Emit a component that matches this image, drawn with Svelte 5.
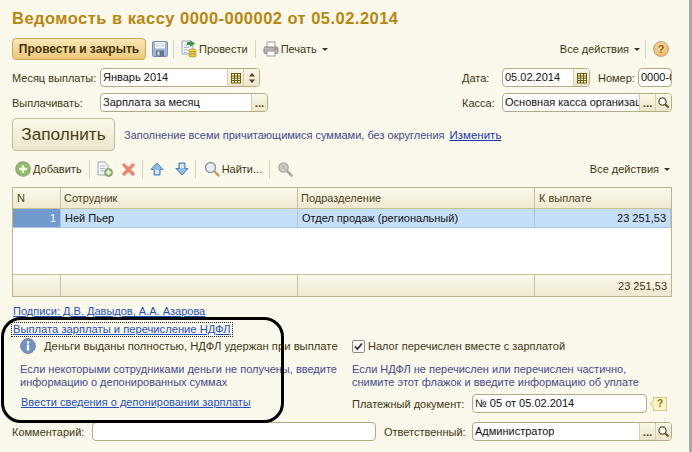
<script>
	const rows = [{ n: 1, name: 'Ней Пьер', dept: 'Отдел продаж (региональный)', sum: '23 251,53' }];
</script>

{#snippet calendar()}
	<span class="cell-btn">
		<svg width="12" height="12" viewBox="0 0 12 12">
			<rect x="1.5" y="1.5" width="9" height="9.5" fill="#fff6c8" stroke="#6b5a12" />
			<path d="M1.5 4h9M1.5 6.2h9M1.5 8.5h9M4.5 2v9M7.5 2v9" stroke="#6b5a12" fill="none" />
		</svg>
	</span>
{/snippet}

{#snippet dots()}
	<span class="cell-btn dots">...</span>
{/snippet}

{#snippet lens()}
	<span class="cell-btn">
		<svg width="13" height="13" viewBox="0 0 13 13">
			<circle cx="5.5" cy="5.5" r="3.6" fill="#fff" stroke="#5c5330" stroke-width="1.3" />
			<path d="M8.2 8.2l3.4 3.4" stroke="#5c5330" stroke-width="2" />
		</svg>
	</span>
{/snippet}

<div class="page">
	<h1>Ведомость в кассу 0000-000002 от 05.02.2014</h1>

	<div class="toolbar main-bar">
		<button class="primary">Провести и закрыть</button>
		<svg class="ico save" width="16" height="16" viewBox="0 0 16 16">
			<rect x="0.5" y="0.5" width="15" height="15" rx="1" fill="#9db6d4" stroke="#7c93b2" />
			<rect x="3" y="1" width="10" height="6.5" fill="#f2f5f9" />
			<path d="M4 3h8M4 5h8" stroke="#c6d2e0" />
			<rect x="4" y="9.5" width="8" height="6" fill="#61778f" />
			<rect x="5.5" y="10.5" width="2" height="4" fill="#d8e0ea" />
		</svg>
		<i class="sep"></i>
		<svg class="ico" width="16" height="18" viewBox="0 0 16 18">
			<path d="M1 1h8l3 3v10H1z" fill="#f4f6f8" stroke="#9aa8ba" />
			<path d="M3 5h5M3 7.5h5M3 10h4M3 12.5h3" stroke="#a9b8cc" />
			<path d="M9 0l5 3.5-5 3.5V5H6V2h3z" fill="#3f9a3f" />
			<ellipse cx="11.5" cy="10.5" rx="3.8" ry="1.6" fill="#f2c850" stroke="#a57a16" stroke-width=".6" />
			<ellipse cx="11.5" cy="13" rx="3.8" ry="1.6" fill="#f2c850" stroke="#a57a16" stroke-width=".6" />
			<ellipse cx="11.5" cy="15.5" rx="3.8" ry="1.6" fill="#f2c850" stroke="#a57a16" stroke-width=".6" />
		</svg>
		<span class="tool-text">Провести</span>
		<i class="sep"></i>
		<svg class="ico" width="16" height="16" viewBox="0 0 16 16">
			<rect x="4" y="1" width="8" height="6" fill="#fff" stroke="#9a9a9a" />
			<rect x="1" y="6" width="14" height="6.5" rx="1.5" fill="#b5b5b5" stroke="#858585" />
			<rect x="4" y="10" width="8" height="5" fill="#fff" stroke="#9a9a9a" />
			<rect x="11.5" y="7.5" width="2" height="1" fill="#e04a2a" />
		</svg>
		<span class="tool-text">Печать</span>
		<i class="caret"></i>
		<div class="push"></div>
		<span class="tool-text">Все действия</span>
		<i class="caret"></i>
		<i class="sep after-caret"></i>
		<span class="help">?</span>
	</div>

	<div class="form-row first">
		<span class="label w88">Месяц выплаты:</span>
		<div class="field w160">
			<span class="value">Январь 2014</span>
			{@render calendar()}
			<span class="cell-btn spin">
				<svg width="8" height="12" viewBox="0 0 8 12"><path d="M4 1l3 3.4H1zM4 11L1 7.6h6z" fill="#4f4420" /></svg>
			</span>
		</div>
		<div class="push"></div>
		<span class="label w40">Дата:</span>
		<div class="field w88">
			<span class="value">05.02.2014</span>
			{@render calendar()}
		</div>
		<span class="label number">Номер:</span>
		<div class="field w34"><span class="value">0000-000002</span></div>
	</div>

	<div class="form-row">
		<span class="label w88">Выплачивать:</span>
		<div class="field w168">
			<span class="value">Зарплата за месяц</span>
			{@render dots()}
		</div>
		<div class="push"></div>
		<span class="label w40">Касса:</span>
		<div class="field w170">
			<span class="value">Основная касса организации</span>
			{@render dots()}
			{@render lens()}
		</div>
	</div>

	<div class="fill-row">
		<button class="fill">Заполнить</button>
		<span class="hint">Заполнение всеми причитающимися суммами, без округления</span>
		<a class="link strong" href="#change">Изменить</a>
	</div>

	<div class="toolbar table-bar">
		<svg class="ico" width="16" height="16" viewBox="0 0 16 16">
			<circle cx="8" cy="8" r="7.2" fill="#8fbf5c" stroke="#9c9f8e" stroke-width="1.3" />
			<path d="M8 4v8M4 8h8" stroke="#f4f8ee" stroke-width="2.4" />
		</svg>
		<span class="tool-text">Добавить</span>
		<i class="sep"></i>
		<svg class="ico" width="16" height="16" viewBox="0 0 16 16">
			<path d="M1 1h7l3 3v10H1z" fill="#f4f6f8" stroke="#9aa8ba" />
			<path d="M3 5h5M3 7.5h5M3 10h4" stroke="#a9b8cc" />
			<circle cx="11.5" cy="11.5" r="4" fill="#8fbf5c" stroke="#8c9a80" />
			<path d="M11.5 9v5M9 11.5h5" stroke="#fff" stroke-width="1.5" />
		</svg>
		<svg class="ico del" width="13" height="13" viewBox="0 0 13 13">
			<path d="M2 2l9 9M11 2l-9 9" stroke="#ef8272" stroke-width="3.2" stroke-linecap="round" />
		</svg>
		<i class="sep"></i>
		<svg class="ico" width="14" height="14" viewBox="0 0 14 14">
			<path d="M7 1l6 6.5H10V13H4V7.5H1z" fill="#8dbde6" stroke="#4f7fa8" />
			<path d="M5 8h4v4H5z" fill="#d6e8f7" />
		</svg>
		<svg class="ico down" width="14" height="14" viewBox="0 0 14 14">
			<path d="M7 13L1 6.5h3V1h6v5.5h3z" fill="#8dbde6" stroke="#4f7fa8" />
			<path d="M5 2h4v4H5z" fill="#d6e8f7" />
		</svg>
		<i class="sep narrow"></i>
		<svg class="ico" width="16" height="16" viewBox="0 0 16 16">
			<circle cx="6.5" cy="6.5" r="5" fill="#e6f0f8" stroke="#8d98a6" stroke-width="1.4" />
			<path d="M10.5 10.5l4 4" stroke="#c49a5a" stroke-width="2.4" stroke-linecap="round" />
		</svg>
		<span class="tool-text">Найти...</span>
		<i class="sep"></i>
		<svg class="ico" width="16" height="16" viewBox="0 0 16 16">
			<circle cx="6.5" cy="6.5" r="4.6" fill="#cfcfca" stroke="#aaa9a2" stroke-width="1.4" />
			<path d="M10.5 10.5l4 4" stroke="#aaa9a2" stroke-width="2.6" stroke-linecap="round" />
			<path d="M3.5 2.5l6 7M9.5 2.5l-6 7" stroke="#b3aea2" />
		</svg>
		<div class="push"></div>
		<span class="tool-text">Все действия</span>
		<i class="caret last"></i>
	</div>

	<table>
		<colgroup>
			<col class="c-n" /><col class="c-name" /><col class="c-dept" /><col />
		</colgroup>
		<thead>
			<tr>
				<th>N</th>
				<th>Сотрудник</th>
				<th>Подразделение</th>
				<th>К выплате</th>
			</tr>
		</thead>
		<tbody>
			{#each rows as row}
				<tr class="selected">
					<td class="num">{row.n}</td>
					<td>{row.name}</td>
					<td>{row.dept}</td>
					<td class="right">{row.sum}</td>
				</tr>
			{/each}
			<tr class="empty"><td colspan="4"></td></tr>
		</tbody>
		<tfoot>
			<tr>
				<td></td>
				<td></td>
				<td></td>
				<td class="right">23 251,53</td>
			</tr>
		</tfoot>
	</table>

	<a class="link signs" href="#signs">Подписи: Д.В. Давыдов, А.А. Азарова</a>
	<div class="section-line"><a class="link focused" href="#pay">Выплата зарплаты и перечисление НДФЛ</a></div>

	<div class="columns">
		<div class="col-left">
			<div class="info">
				<svg width="16" height="16" viewBox="0 0 16 16">
					<circle cx="8" cy="8" r="7.4" fill="#6d94c2" stroke="#7d8794" />
					<circle cx="8" cy="4.4" r="1.4" fill="#fff" />
					<rect x="6.8" y="6.6" width="2.4" height="6" fill="#fff" />
				</svg>
				<span>Деньги выданы полностью, НДФЛ удержан при выплате</span>
			</div>
			<p class="hint note">Если некоторыми сотрудниками деньги не получены, введите<br />информацию о депонированных суммах</p>
			<a class="link deposit" href="#deposit">Ввести сведения о депонировании зарплаты</a>
		</div>
		<div class="col-right">
			<div class="check-row">
				<span class="checkbox">
					<svg width="9" height="9" viewBox="0 0 9 9"><path d="M1 4.5l2.4 2.6L8 1.5" fill="none" stroke="#333" stroke-width="1.8" /></svg>
				</span>
				<span>Налог перечислен вместе с зарплатой</span>
			</div>
			<p class="hint note">Если НДФЛ не перечислен или перечислен частично,<br />снимите этот флажок и введите информацию об уплате</p>
			<div class="doc-row">
				<span class="label">Платежный документ:</span>
				<div class="field w175"><span class="value">№ 05 от 05.02.2014</span></div>
				<span class="tip">?</span>
			</div>
		</div>
	</div>

	<div class="form-row bottom">
		<span class="label comment">Комментарий:</span>
		<div class="field w284"></div>
		<span class="label owner">Ответственный:</span>
		<div class="field w200">
			<span class="value">Администратор</span>
			{@render dots()}
			{@render lens()}
		</div>
	</div>

	<!-- обводка от руки поверх формы -->
	<div class="annotation"></div>
</div>

<style>
	:global(body) {
		margin: 0;
	}

	.page {
		position: relative;
		box-sizing: border-box;
		width: 692px;
		height: 452px;
		overflow: hidden;
		padding: 0 17px 0 12px;
		border-right: 3px solid #a8a8a4;
		background: #fbf9ec;
		font-family: 'Liberation Sans', Arial, sans-serif;
		font-size: 11px;
		color: #3f3510;
		display: flex;
		flex-direction: column;
	}

	h1 {
		margin: 8px 0 10px;
		height: 20px;
		line-height: 20px;
		font-size: 16.5px;
		font-weight: bold;
		letter-spacing: 0.47px;
		color: #b8860f;
		white-space: nowrap;
	}

	.toolbar {
		display: flex;
		align-items: center;
		flex: none;
	}

	.main-bar {
		height: 22px;
		padding-right: 3px;
	}

	.table-bar {
		height: 18px;
		margin: 9px 0 9px 3px;
		padding-right: 2px;
	}

	.push {
		flex: 1;
	}

	.ico {
		flex: none;
	}

	.save {
		margin-left: 6px;
	}

	.tool-text {
		margin-left: 2px;
		white-space: nowrap;
	}

	.sep {
		width: 1px;
		height: 18px;
		margin: 0 7px;
		background: #d8d2b4;
		flex: none;
	}

	.save + .sep {
		margin-left: 5px;
	}

	.after-caret {
		margin-left: 5px;
	}

	.narrow {
		margin-left: 6px;
		margin-right: 8px;
	}

	.caret {
		width: 0;
		height: 0;
		margin-left: 5px;
		border-left: 3px solid transparent;
		border-right: 3px solid transparent;
		border-top: 3px solid #3f3510;
		flex: none;
	}

	.del {
		margin-left: 9px;
	}

	.down {
		margin-left: 11px;
	}

	button {
		font-family: inherit;
		cursor: pointer;
		box-sizing: border-box;
	}

	.primary {
		width: 134px;
		height: 22px;
		padding: 0;
		border: 1px solid #c9a860;
		border-radius: 4px;
		background: linear-gradient(#fbe6b4, #eec878);
		font-size: 12px;
		font-weight: bold;
		color: #3f3510;
	}

	.form-row {
		display: flex;
		align-items: center;
		height: 19px;
		margin-top: 6px;
		flex: none;
	}

	.first {
		margin-top: 8px;
	}

	.label {
		flex: none;
		white-space: nowrap;
	}

	.w88.label {
		width: 88px;
	}

	.w40 {
		width: 40px;
	}

	.number {
		width: 40px;
		margin-left: 8px;
	}

	.field {
		box-sizing: border-box;
		height: 19px;
		flex: none;
		display: flex;
		align-items: stretch;
		overflow: hidden;
		background: #fff;
		border: 1px solid #b5aa82;
		border-radius: 4px;
		color: #111;
	}

	.value {
		flex: 1;
		min-width: 0;
		padding-left: 2px;
		line-height: 17px;
		white-space: nowrap;
		overflow: hidden;
	}

	.cell-btn {
		flex: none;
		width: 15px;
		display: flex;
		align-items: center;
		justify-content: center;
		background: linear-gradient(#fbf8e8, #ece5c8);
		border-left: 1px solid #d5ceb0;
	}

	.dots {
		font-weight: bold;
		font-size: 11.5px;
		align-items: flex-end;
		line-height: 15px;
		color: #4f4420;
	}

	.w160 {
		width: 160px;
	}

	.w168 {
		width: 168px;
	}

	.field.w88 {
		width: 88px;
	}

	.w34 {
		width: 34px;
	}

	.w170 {
		width: 170px;
	}

	.w175 {
		width: 175px;
	}

	.w284 {
		width: 284px;
	}

	.w200 {
		width: 200px;
	}

	.fill-row {
		display: flex;
		align-items: center;
		margin-top: 6px;
		height: 33px;
		flex: none;
	}

	.fill {
		width: 103px;
		height: 33px;
		padding: 0;
		margin-right: 9px;
		border: 1px solid #c4ba94;
		border-radius: 4px;
		background: linear-gradient(#fbf9ec, #ebe5cb);
		font-size: 17.2px;
		color: #4a3d0e;
	}

	.hint {
		color: #3f4a8c;
		white-space: nowrap;
	}

	.link {
		color: #1e4fc0;
		text-decoration: underline;
		white-space: nowrap;
	}

	.strong {
		margin-left: 5px;
		font-size: 11.5px;
		color: #1a35b0;
	}

	table {
		width: 660px;
		flex: none;
		table-layout: fixed;
		border-collapse: separate;
		border-spacing: 0;
		border: 1px solid #bdb38e;
		background: #fff;
	}

	.c-n {
		width: 48px;
	}

	.c-name,
	.c-dept {
		width: 237px;
	}

	th {
		height: 20px;
		padding: 0 3px;
		font-weight: normal;
		text-align: left;
		color: #4a4118;
		background: linear-gradient(#fbf9ec, #efe9d0);
		border-right: 1px solid #c9c09c;
		border-bottom: 1px solid #c9c09c;
	}

	th:first-child,
	th:last-child {
		padding-left: 4px;
	}

	th:last-child,
	td:last-child {
		border-right: 0;
	}

	td {
		padding: 0 4px;
		white-space: nowrap;
	}

	.selected td {
		height: 18px;
		background: #c6dff8;
		color: #111;
		border-right: 1px solid #a9c4e2;
		border-bottom: 1px solid #a9c4e2;
	}

	.selected .num {
		background: #7199cc;
		color: #fff;
		text-align: right;
	}

	.right {
		text-align: right;
	}

	.empty td {
		height: 46px;
	}

	tfoot td {
		height: 21px;
		background: linear-gradient(#fbf9ec, #efe9d0);
		border-top: 1px solid #c9c09c;
		border-right: 1px solid #c9c09c;
	}

	.signs {
		margin: 7px 0 0 1px;
		line-height: 14px;
		align-self: flex-start;
	}

	.section-line {
		margin-top: 5px;
		height: 14px;
		line-height: 13px;
	}

	.focused {
		outline: 1px dotted #222;
		display: inline-block;
		padding: 0 1px;
		font-size: 11.2px;
	}

	.columns {
		display: flex;
		height: 85px;
		flex: none;
	}

	.col-left {
		width: 340px;
		flex: none;
	}

	.info {
		display: flex;
		align-items: center;
		gap: 8px;
		height: 18px;
		margin-left: 8px;
		white-space: nowrap;
		font-size: 11.25px;
	}

	.note {
		margin: 8px 0 0 8px;
		line-height: 13px;
	}

	.deposit {
		display: block;
		margin: 6px 0 0 9px;
		line-height: 14px;
	}

	.col-right .note {
		margin-left: 0;
	}

	.col-right {
		flex: 1;
	}

	.check-row {
		display: flex;
		align-items: center;
		gap: 3px;
		height: 18px;
		white-space: nowrap;
	}

	.checkbox {
		box-sizing: border-box;
		width: 13px;
		height: 13px;
		display: flex;
		align-items: center;
		justify-content: center;
		background: #fff;
		border: 1px solid #8f8a72;
		border-radius: 2px;
	}

	.doc-row {
		display: flex;
		align-items: center;
		height: 19px;
		margin-top: 5px;
	}

	.doc-row .label {
		width: 120px;
	}

	.tip {
		position: relative;
		box-sizing: border-box;
		width: 14px;
		height: 14px;
		margin-left: 6px;
		text-align: center;
		line-height: 12px;
		font-weight: bold;
		font-size: 10px;
		color: #8a6d10;
		background: #fdf6c4;
		border: 1px solid #d6c98a;
	}

	.tip::before {
		content: '';
		position: absolute;
		left: -3px;
		top: 3px;
		width: 4px;
		height: 4px;
		background: #fdf6c4;
		border-left: 1px solid #d6c98a;
		border-bottom: 1px solid #d6c98a;
		transform: rotate(45deg);
	}

	.comment {
		width: 80px;
	}

	.owner {
		width: 88px;
		margin-left: 8px;
	}

	.bottom {
		margin-top: 0;
	}

	.help {
		width: 16px;
		height: 16px;
		border-radius: 50%;
		border: 1px solid #b5a98a;
		box-sizing: border-box;
		text-align: center;
		line-height: 14px;
		font-weight: bold;
		color: #9a5a10;
		background: radial-gradient(circle at 50% 40%, #fbe3a8, #eba850);
	}

	.annotation {
		position: absolute;
		left: 1px;
		top: 317px;
		width: 283px;
		height: 106px;
		box-sizing: border-box;
		border: 3px solid #000;
		border-radius: 20px;
		pointer-events: none;
	}
</style>
